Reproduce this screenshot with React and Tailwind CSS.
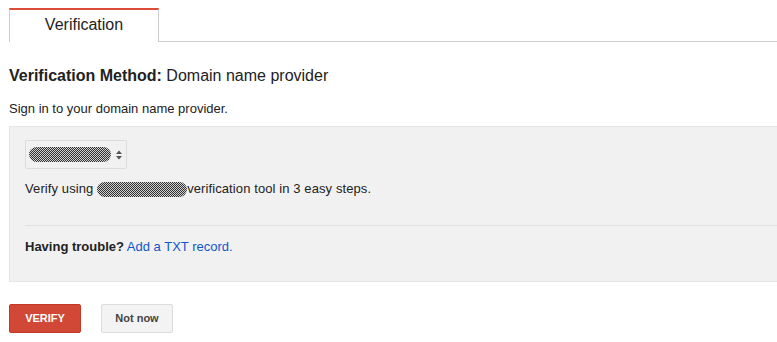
import React from 'react';

const Redacted = ({ className }) => (
  <span
    className={`inline-block rounded-full bg-[repeating-conic-gradient(#333_0_25%,#cfcfcf_0_50%)] bg-[length:2px_2px] ${className}`}
  />
);

const App = () => {
  return (
    <div className="w-[777px] h-[342px] bg-white overflow-hidden font-['Liberation_Sans',Arial,sans-serif] text-[#222]">
      {/* Tabs */}
      <div className="flex pt-2">
        <div className="w-[9px] shrink-0" />
        <div className="w-[150px] h-[34px] shrink-0 border-t-2 border-t-[#dd4b39] border-x border-x-[#ccc] bg-white flex items-center justify-center text-[16px] text-[#222] pb-[2px]">
          Verification
        </div>
        <div className="flex-1 border-b border-[#ccc]" />
      </div>

      <div className="pl-[9px]">
        {/* Heading */}
        <h1 className="mt-[24px] text-[16px] leading-[20px] text-[#222]">
          <span className="font-bold">Verification Method:</span> Domain name provider
        </h1>
        <p className="mt-[15px] text-[13px] leading-[16px]">Sign in to your domain name provider.</p>

        {/* Panel */}
        <div className="mt-[9px] h-[156px] bg-[#f1f1f1] border border-r-0 border-[#e5e5e5] pl-[15px] pt-[13px]">
          <div className="w-[102px] h-[29px] border border-[#dcdcdc] rounded-[2px] flex items-center pl-[3px]">
            <Redacted className="w-[82px] h-[15px]" />
            <svg width="10" height="14" viewBox="0 0 10 14" className="ml-[3px]">
              <path d="M2 6 L5 2.5 L8 6 Z" fill="#555" />
              <path d="M2 8 L5 11.5 L8 8 Z" fill="#555" />
            </svg>
          </div>
          <p className="mt-[12px] text-[13px] leading-[16px] flex items-center tracking-[0.1px]">
            Verify using&nbsp;
            <Redacted className="w-[90px] h-[15px]" />
            verification tool in 3 easy steps.
          </p>
          <div className="mt-[28px] border-t border-[#e0e0e0]" />
          <p className="mt-[13px] text-[13px] leading-[16px]">
            <span className="font-bold">Having trouble?</span>{' '}
            <a href="#" className="text-[#1155cc]">Add a TXT record.</a>
          </p>
        </div>

        {/* Buttons */}
        <div className="mt-[22px] flex gap-[20px]">
          <button className="w-[72px] h-[29px] rounded-[2px] bg-[#d14836] border border-[#c53727] text-white text-[11px] font-bold">
            VERIFY
          </button>
          <button className="w-[72px] h-[29px] rounded-[2px] bg-[#f3f3f3] border border-[#dcdcdc] text-[#444] text-[11px] font-bold">
            Not now
          </button>
        </div>
      </div>
    </div>
  );
};

export default App;
